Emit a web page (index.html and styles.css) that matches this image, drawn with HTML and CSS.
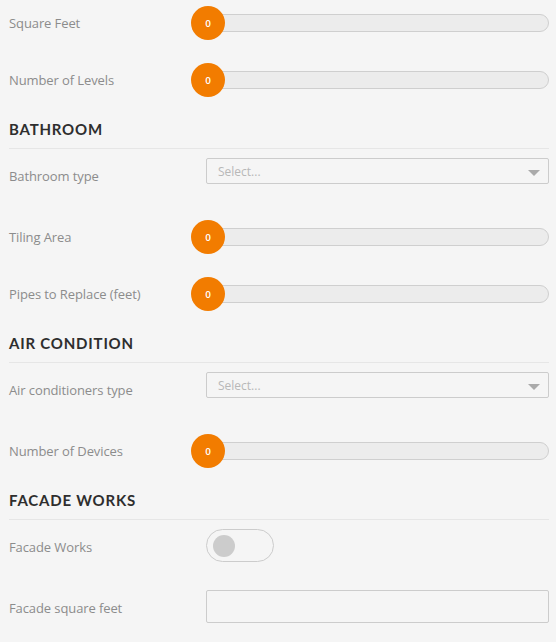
FILE: index.html
```html
<!DOCTYPE html>
<html>
<head>
<meta charset="utf-8">
<link rel="stylesheet" href="styles.css">
</head>
<body>
<div class="form">
  <div class="row slider-row">
    <div class="label">Square Feet</div>
    <div class="slider"><div class="track"></div><div class="handle">0</div></div>
  </div>
  <div class="row slider-row">
    <div class="label">Number of Levels</div>
    <div class="slider"><div class="track"></div><div class="handle">0</div></div>
  </div>

  <h3 class="section">BATHROOM</h3>
  <div class="row select-row">
    <div class="label">Bathroom type</div>
    <div class="select"><span class="placeholder">Select...</span><span class="arrow"></span></div>
  </div>
  <div class="row slider-row">
    <div class="label">Tiling Area</div>
    <div class="slider"><div class="track"></div><div class="handle">0</div></div>
  </div>
  <div class="row slider-row">
    <div class="label">Pipes to Replace (feet)</div>
    <div class="slider"><div class="track"></div><div class="handle">0</div></div>
  </div>

  <h3 class="section">AIR CONDITION</h3>
  <div class="row select-row">
    <div class="label">Air conditioners type</div>
    <div class="select"><span class="placeholder">Select...</span><span class="arrow"></span></div>
  </div>
  <div class="row slider-row">
    <div class="label">Number of Devices</div>
    <div class="slider"><div class="track"></div><div class="handle">0</div></div>
  </div>

  <h3 class="section">FACADE WORKS</h3>
  <div class="row toggle-row">
    <div class="label">Facade Works</div>
    <div class="toggle-wrap"><div class="toggle"><div class="knob"></div></div></div>
  </div>
  <div class="row input-row">
    <div class="label">Facade square feet</div>
    <div class="input"></div>
  </div>
</div>
</body>
</html>
```

FILE: styles.css
```css
* { box-sizing: border-box; }
html, body { margin: 0; padding: 0; background: #f5f5f5; }
body {
  font-family: "Open Sans", "Lato", sans-serif;
  width: 556px;
  height: 642px;
  overflow: hidden;
}
.form {
  padding: 6px 7px 0 9px;
}
.row {
  display: grid;
  grid-template-columns: 182px 1fr;
  align-items: center;
}
.label {
  font-size: 13px;
  line-height: 18px;
  color: #8c8c8c;
  white-space: nowrap;
  letter-spacing: -0.1px;
}
.slider-row { height: 34px; margin-bottom: 23px; }
.slider {
  display: flex;
  align-items: center;
  height: 34px;
  position: relative;
}
.track {
  flex: 1;
  height: 18px;
  margin-left: 4px;
  border: 1px solid #cfcfcf;
  border-radius: 9px;
  background: #ececec;
}
.handle {
  position: absolute;
  left: 0;
  top: 0;
  width: 34px;
  height: 34px;
  border-radius: 50%;
  background: #f27c00;
  color: #fff;
  font-size: 9px;
  font-weight: 700;
  display: flex;
  align-items: center;
  justify-content: center;
  font-family: "Lato", sans-serif;
}
.section {
  margin: 0 0 9px 0;
  padding: 0 0 10px 0;
  font-size: 15px;
  line-height: 18px;
  font-weight: 700;
  letter-spacing: 0.8px;
  color: #2e2e2e;
  border-bottom: 1px solid #e6e6e6;
  font-family: "Lato", "Open Sans", sans-serif;
}
.select-row {
  height: 26px;
  margin-bottom: 36px;
  align-items: start;
}
.select-row .label { padding-top: 9px; }
.select {
  height: 26px;
  margin-left: 15px;
  border: 1px solid #cccccc;
  border-radius: 2px;
  background: #f5f5f5;
  display: flex;
  align-items: center;
  justify-content: space-between;
  padding: 0 8px 0 11px;
}
.placeholder {
  font-size: 12px;
  color: #b8b8b8;
}
.arrow {
  width: 0;
  height: 0;
  border-left: 6px solid transparent;
  border-right: 6px solid transparent;
  border-top: 6px solid #aaaaaa;
  margin-top: 3px;
}
.toggle-row {
  height: 33px;
  margin-bottom: 28px;
}
.toggle-row .label, .input-row .label { padding-top: 3px; }
.toggle-wrap { padding-left: 15px; }
.toggle {
  width: 68px;
  height: 33px;
  border: 1px solid #cccccc;
  border-radius: 17px;
  display: flex;
  align-items: center;
  padding-left: 6px;
}
.knob {
  width: 22px;
  height: 22px;
  border-radius: 50%;
  background: #cccccc;
}
.input-row { height: 33px; }
.input {
  height: 33px;
  margin-left: 15px;
  border: 1px solid #cccccc;
  border-radius: 2px;
}
```
